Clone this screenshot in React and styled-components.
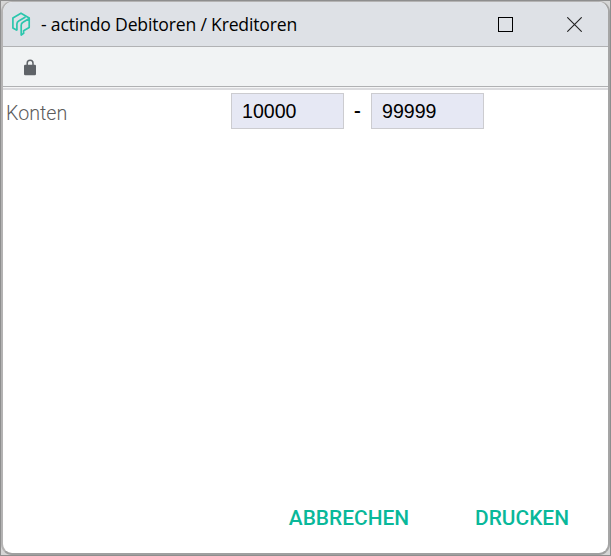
import React from 'react';
import styled, { createGlobalStyle } from 'styled-components';

const GlobalStyle = createGlobalStyle`
  * { box-sizing: border-box; }
  html, body { margin: 0; padding: 0; overflow: hidden; }
  body { background: #d2d2d2; }
`;

const Desktop = styled.div`
  width: 611px;
  height: 556px;
  border: 1px solid #8e8e8e;
  background: #d6d6d6;
`;

const Window = styled.main`
  width: 609px;
  height: 554px;
  display: flex;
  flex-direction: column;
  overflow: hidden;
  border: solid #b0b0b0;
  border-width: 1px 2px 2px;
  border-color: #b4b3b3 #a5a5a5 #a0a0a0 #b4b3b3;
  border-radius: 11px;
  background: #fff;
`;

const TitleBar = styled.header`
  height: 45px;
  flex: none;
  display: flex;
  align-items: center;
  background: #dee1e6;
  border-bottom: 1px solid #b1b2b4;
  padding-left: 5px;
`;

const Title = styled.h1`
  flex: 1;
  margin: 0 0 1px 5px;
  font: 400 17.6px/24px "Open Sans", "Noto Sans", sans-serif;
  letter-spacing: -0.18px;
  color: #000;
  white-space: nowrap;
`;

const WindowControls = styled.div`
  display: flex;
  margin-right: -1px;
`;

const WindowButton = styled.button`
  width: 69px;
  height: 44px;
  display: flex;
  align-items: center;
  justify-content: center;
  padding: 0;
  border: 0;
  background: none;
`;

const AddressBar = styled.div`
  height: 43px;
  flex: none;
  display: flex;
  padding: 12px 0 0 21px;
  background: #f1f3f4;
  border-bottom: 2px solid #dadadd;
  box-shadow: inset 0 -1px #f4f4f5, inset 0 -2px #b0b1b3;
`;

const Content = styled.section`
  flex: 1;
  display: flex;
  flex-direction: column;
  justify-content: space-between;
`;

const FormRow = styled.div`
  display: flex;
  padding: 3px 0 0 3px;
`;

const Label = styled.label`
  width: 225px;
  padding-top: 9px;
  font: 300 19.7px/24px Roboto, sans-serif;
  color: #5c5c5c;
`;

const AccountInput = styled.input`
  width: 113px;
  height: 36px;
  padding: 0 10px;
  border: 1px solid #ccccd0;
  border-radius: 0;
  outline: 0;
  background: #e6e8f4;
  color: #000;
  font: 400 19.6px "Liberation Sans", Arial, sans-serif;
`;

const Dash = styled.span`
  width: 27px;
  text-align: center;
  font: 500 20px/37px Roboto, sans-serif;
  color: #000;
`;

const Actions = styled.footer`
  display: flex;
  justify-content: flex-end;
  gap: 66px;
  padding: 0 39px 23px 0;
`;

const ActionButton = styled.button`
  padding: 0;
  border: 0;
  background: none;
  color: #09b89a;
  font: 500 20.9px/24px Roboto, sans-serif;
`;

const Logo = () => (
  <svg width="28" height="30" viewBox="0 0 28 30" fill="none" stroke="#2bc6ad" strokeWidth="1.7" strokeLinejoin="round">
    <path d="M8.9 21.2 4.9 18.9V8.9L13 4.2l8.2 4.7v2" />
    <path d="M13.2 26V16.2q0-2 1.8-3l6.2-3.7v9l-5.6 3.2v2.7z" />
    <path d="M8.9 21.4V15q0-2 1.8-3l6.8-3.9" />
  </svg>
);

const Lock = () => (
  <svg width="13" height="17" viewBox="0 0 13 17">
    <path d="M3.2 7V4.2a2.9 2.9 0 0 1 5.8 0V7" fill="none" stroke="#5f6368" strokeWidth="1.5" />
    <rect x="0" y="5.7" width="12" height="10.6" rx="1.3" fill="#5f6368" />
  </svg>
);

const Maximize = () => (
  <svg width="15" height="15" fill="none" stroke="#000" shapeRendering="crispEdges">
    <rect x="0.5" y="0.5" width="14" height="14" />
  </svg>
);

const Close = () => (
  <svg width="15" height="15" fill="none" stroke="#222" strokeWidth="1.1">
    <path d="m.3.3 14.4 14.4M14.7.3.3 14.7" />
  </svg>
);

export default function App() {
  return (
    <Desktop>
      <GlobalStyle />
      <Window>
        <TitleBar>
          <Logo />
          <Title>- actindo Debitoren / Kreditoren</Title>
          <WindowControls>
            <WindowButton aria-label="Maximieren"><Maximize /></WindowButton>
            <WindowButton aria-label="Schließen"><Close /></WindowButton>
          </WindowControls>
        </TitleBar>
        <AddressBar><Lock /></AddressBar>
        <Content>
          <FormRow>
            <Label htmlFor="from">Konten</Label>
            <AccountInput id="from" defaultValue="10000" />
            <Dash>-</Dash>
            <AccountInput aria-label="Konten bis" defaultValue="99999" />
          </FormRow>
          <Actions>
            <ActionButton>ABBRECHEN</ActionButton>
            <ActionButton>DRUCKEN</ActionButton>
          </Actions>
        </Content>
      </Window>
    </Desktop>
  );
}
